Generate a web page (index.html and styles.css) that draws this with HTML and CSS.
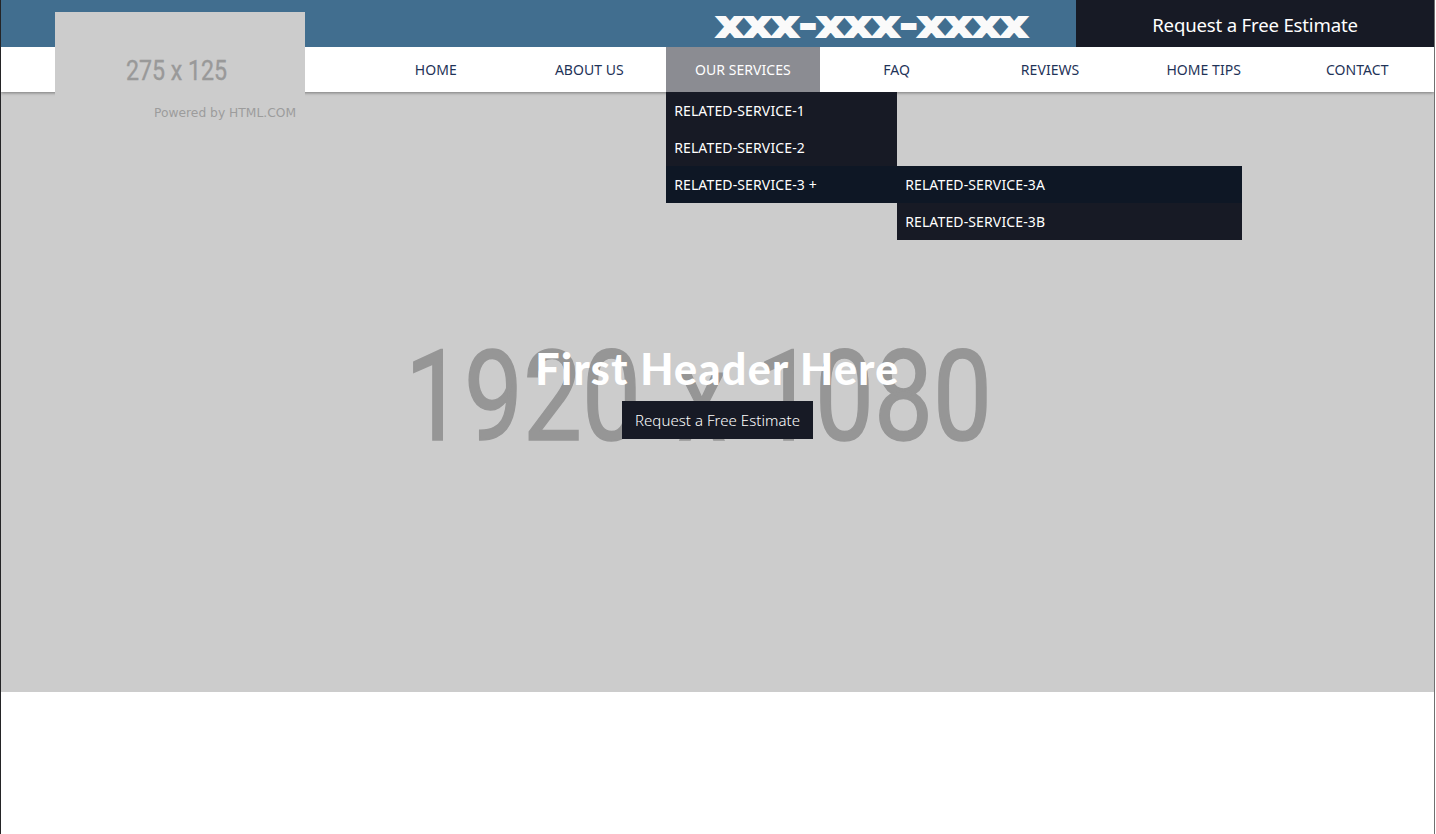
FILE: index.html
```
<!DOCTYPE html>
<html lang="en">
<head>
<meta charset="utf-8">
<title>Home</title>
<link rel="stylesheet" href="styles.css">
</head>
<body>
<div class="page">
  <header class="header">
    <div class="topbar">
      <a class="phone"><svg width="320" height="47"><text x="5" y="37" textLength="312" lengthAdjust="spacingAndGlyphs">xxx-xxx-xxxx</text></svg></a>
      <a class="estimate"><span>Request a Free Estimate</span></a>
    </div>
    <nav class="nav">
      <a class="item">HOME</a>
      <a class="item">ABOUT US</a>
      <div class="item active">OUR SERVICES
        <div class="menu">
          <a class="entry">RELATED-SERVICE-1</a>
          <a class="entry">RELATED-SERVICE-2</a>
          <div class="entry open">RELATED-SERVICE-3 +
            <div class="submenu">
              <a class="entry open">RELATED-SERVICE-3A</a>
              <a class="entry">RELATED-SERVICE-3B</a>
            </div>
          </div>
        </div>
      </div>
      <a class="item">FAQ</a>
      <a class="item">REVIEWS</a>
      <a class="item">HOME TIPS</a>
      <a class="item">CONTACT</a>
    </nav>
    <svg class="logo" width="250" height="114">
      <text class="logo-size" x="71" y="68" textLength="101" lengthAdjust="spacingAndGlyphs">275 x 125</text>
      <text class="logo-credit" x="99" y="105" textLength="142" lengthAdjust="spacingAndGlyphs">Powered by HTML.COM</text>
    </svg>
  </header>
  <main class="hero">
    <svg class="backdrop" width="600" height="120">
      <text x="2" y="99.500" textLength="236" lengthAdjust="spacingAndGlyphs">1920</text>
      <text x="275" y="99.500" textLength="48" lengthAdjust="spacingAndGlyphs">x</text>
      <text x="353" y="99.500" textLength="236" lengthAdjust="spacingAndGlyphs">1080</text>
    </svg>
    <h1 class="title">First Header Here</h1>
    <a class="cta">Request a Free Estimate</a>
  </main>
</div>
</body>
</html>
```
FILE: styles.css
```
* { box-sizing: border-box; }
body { margin: 0; background: #fff; font-family: "Noto Sans", "Open Sans", sans-serif; }
.page { height: 834px; border-left: 1px solid #242426; border-right: 1px solid #707070; margin-right: 1px; overflow: hidden; }
.header { position: relative; z-index: 2; height: 92px; background: #fff; box-shadow: 0 1px 3px rgba(0,0,0,.4); }
.topbar { display: flex; justify-content: flex-end; height: 47px; background: #416e8f; }
.phone { width: 320px; margin-right: 45px; }
.phone svg { display: block; }
.phone text { font: bold 36px "DejaVu Sans", sans-serif; fill: #fafafa; stroke: #fafafa; stroke-width: 2px; }
.estimate { width: 358px; background: #171a25; color: #fff; font-size: 18.6px; letter-spacing: -.18px; line-height: 50px; text-align: center; }
.nav { display: flex; height: 45px; margin-left: 358px; }
.item { position: relative; flex: 1 1 0; line-height: 46px; text-align: center; font-size: 14px; letter-spacing: .05px; color: #1f3358; white-space: nowrap; }
.active { background: #8b8c92; color: #fff; }
.menu { position: absolute; top: 45px; left: 0; width: 231px; text-align: left; letter-spacing: .13px; }
.entry { display: block; position: relative; height: 37px; line-height: 38px; padding-left: 8px; background: #171a25; color: #fff; }
.open { background: #0e1725; }
.submenu { position: absolute; top: 0; left: 231px; width: 345px; }
.logo { position: absolute; left: 54px; top: 12px; background: #ccc; }
.logo-size { font: 27px Roboto, sans-serif; fill: #999; stroke: #999; stroke-width: .4px; }
.logo-credit { font: 11.5px "DejaVu Sans", sans-serif; fill: #9c9c9c; }
.hero { position: relative; height: 600px; padding-top: 248px; display: flex; flex-direction: column; align-items: center; background: #ccc; }
.backdrop { position: absolute; left: 402px; top: 248px; }
.backdrop text { font: 127px Roboto, sans-serif; fill: #969696; stroke: #969696; stroke-width: 1.6px; }
.title { position: relative; margin: 0; height: 61px; font: 900 43px/58px Lato, sans-serif; letter-spacing: 1.3px; color: #fff; }
.cta { position: relative; width: 191px; height: 38px; background: #171a25; color: #fff; font: 300 15px/39px "Noto Sans", sans-serif; text-align: center; letter-spacing: .05px; white-space: nowrap; }
```
